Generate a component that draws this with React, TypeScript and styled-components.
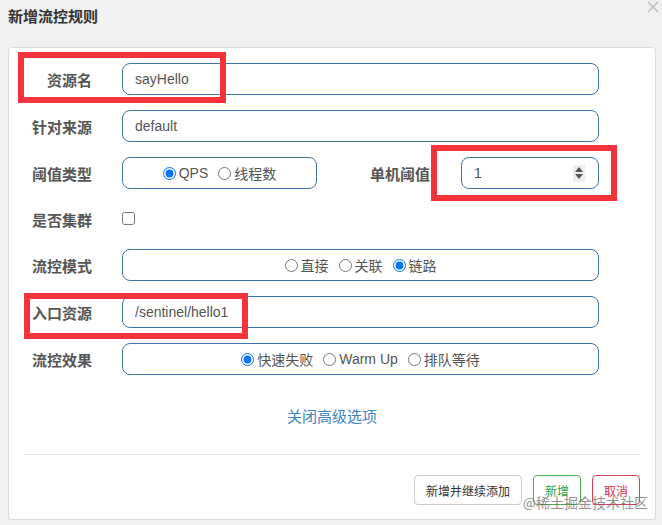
import styled, { createGlobalStyle } from 'styled-components';

const GlobalStyle = createGlobalStyle`
    html, body {
        margin: 0;
        padding: 0;
        background: #f0f0f0;
    }
    * {
        box-sizing: border-box;
    }
`;

const FONT = `"Liberation Sans", "Noto Sans CJK SC", sans-serif`;
const CJK = `"Noto Sans CJK SC", "Liberation Sans", sans-serif`;

const Page = styled.div`
    position: relative;
    width: 662px;
    height: 525px;
    background: #f0f0f0;
    font-family: ${FONT};
    overflow: hidden;
`;

const Header = styled.div`
    height: 47px;
    display: flex;
    align-items: flex-start;
    justify-content: space-between;
    padding: 5px 2px 0 8px;
`;

const Title = styled.div`
    font-family: ${CJK};
    font-size: 15px;
    font-weight: 600;
    color: #333;
    line-height: 22px;
`;

const CloseBtn = styled.div`
    margin-top: -5px;
    width: 14px;
    height: 14px;
    display: flex;
    align-items: center;
    justify-content: center;
`;

const Card = styled.div`
    margin: 0 6px 0 8px;
    background: #fff;
    border: 1px solid #dcdcdc;
    border-radius: 4px;
    padding: 15px 0 14px;
`;

const Form = styled.div`
    display: flex;
    flex-direction: column;
    gap: 15px;
    padding: 0 56px 0 15px;
`;

const Row = styled.div<{ $h?: number }>`
    display: grid;
    grid-template-columns: 68px 1fr;
    column-gap: 30px;
    align-items: center;
    height: ${({ $h }) => $h ?? 32}px;
`;

const Label = styled.label`
    font-family: ${CJK};
    font-size: 15px;
    font-weight: bold;
    color: #555;
    text-align: right;
    white-space: nowrap;
`;

const Field = styled.div`
    height: 32px;
    border: 1px solid #3f74a6;
    border-radius: 8px;
    display: flex;
    align-items: center;
    padding: 0 12px;
    font-size: 14px;
    color: #555;
`;

const TextInput = styled.input`
    border: none;
    outline: none;
    background: transparent;
    width: 100%;
    font-family: ${FONT};
    font-size: 14px;
    color: #555;
    padding: 0;
`;

const RadioBox = styled(Field)<{ $w?: number }>`
    justify-content: center;
    gap: 10px;
    ${({ $w }) => ($w ? `width: ${$w}px; flex: none;` : '')}
`;

const RadioItem = styled.label`
    display: flex;
    align-items: center;
    gap: 2px;
    font-family: ${FONT};
    font-size: 14px;
    color: #555;
    white-space: nowrap;

    & > input {
        margin: 0 1px 0 0;
        width: 13px;
        height: 13px;
    }
`;

const SplitRow = styled.div`
    display: flex;
    align-items: center;
`;

const SubLabel = styled(Label)`
    flex: 1;
    padding-right: 31px;
`;

const NumberField = styled(Field)`
    width: 138px;
    flex: none;
    padding: 0 13px 0 12px;
`;

const Spinner = styled.div`
    width: 12px;
    height: 17px;
    background: #eeeeee;
    display: flex;
    flex-direction: column;
    align-items: center;
    justify-content: center;
    gap: 2px;
    flex: none;
`;

const Check = styled.input`
    margin: 3px 0 0 0;
    width: 13px;
    height: 13px;
`;

const LinkRow = styled.div`
    margin-top: 31px;
    text-align: center;
    line-height: 20px;
`;

const Link = styled.a`
    font-family: ${CJK};
    font-size: 15px;
    color: #3d84c4;
    cursor: pointer;
`;

const Divider = styled.div`
    margin: 27px 15px 0;
    height: 1px;
    background: #e3e3e3;
`;

const Footer = styled.div`
    margin-top: 20px;
    padding: 0 15px;
    display: flex;
    justify-content: flex-end;
    gap: 11px;
`;

const Button = styled.button<{ $tone?: 'default' | 'success' | 'danger' }>`
    height: 30px;
    padding: 0 11px;
    border-radius: 4px;
    background: #fff;
    font-family: ${CJK};
    font-size: 12px;
    cursor: pointer;
    border: 1px solid
        ${({ $tone }) =>
            $tone === 'success' ? '#4cae4c' : $tone === 'danger' ? '#d43f5a' : '#cccccc'};
    color: ${({ $tone }) =>
        $tone === 'success' ? '#2e9e3e' : $tone === 'danger' ? '#d4304f' : '#333'};
`;

const Mark = styled.div<{ $x: number; $y: number; $w: number; $h: number }>`
    position: absolute;
    left: ${({ $x }) => $x}px;
    top: ${({ $y }) => $y}px;
    width: ${({ $w }) => $w}px;
    height: ${({ $h }) => $h}px;
    border: 6px solid #f4333b;
    pointer-events: none;
`;

const Watermark = styled.div`
    position: absolute;
    right: 14px;
    bottom: 13px;
    font-family: ${CJK};
    font-size: 14px;
    color: rgba(110, 110, 110, 0.75);
    pointer-events: none;
`;

function App() {
    return (
        <Page>
            <GlobalStyle />
            <Header>
                <Title>新增流控规则</Title>
                <CloseBtn>
                    <svg width="12" height="12" viewBox="0 0 12 12">
                        <path d="M1 1L11 11M11 1L1 11" stroke="#bdbdbd" strokeWidth="1.4" />
                    </svg>
                </CloseBtn>
            </Header>
            <Card>
                <Form>
                    <Row>
                        <Label>资源名</Label>
                        <Field>
                            <TextInput defaultValue="sayHello" />
                        </Field>
                    </Row>
                    <Row>
                        <Label>针对来源</Label>
                        <Field>
                            <TextInput defaultValue="default" />
                        </Field>
                    </Row>
                    <Row>
                        <Label>阈值类型</Label>
                        <SplitRow>
                            <RadioBox $w={195}>
                                <RadioItem>
                                    <input type="radio" name="grade" defaultChecked />
                                    QPS
                                </RadioItem>
                                <RadioItem>
                                    <input type="radio" name="grade" />
                                    线程数
                                </RadioItem>
                            </RadioBox>
                            <SubLabel>单机阈值</SubLabel>
                            <NumberField>
                                <TextInput defaultValue="1" />
                                <Spinner>
                                    <svg width="8" height="5" viewBox="0 0 8 5">
                                        <path d="M4 0L8 5H0Z" fill="#555" />
                                    </svg>
                                    <svg width="8" height="5" viewBox="0 0 8 5">
                                        <path d="M0 0H8L4 5Z" fill="#555" />
                                    </svg>
                                </Spinner>
                            </NumberField>
                        </SplitRow>
                    </Row>
                    <Row $h={30}>
                        <Label>是否集群</Label>
                        <div>
                            <Check type="checkbox" />
                        </div>
                    </Row>
                    <Row>
                        <Label>流控模式</Label>
                        <RadioBox>
                            <RadioItem>
                                <input type="radio" name="strategy" />
                                直接
                            </RadioItem>
                            <RadioItem>
                                <input type="radio" name="strategy" />
                                关联
                            </RadioItem>
                            <RadioItem>
                                <input type="radio" name="strategy" defaultChecked />
                                链路
                            </RadioItem>
                        </RadioBox>
                    </Row>
                    <Row>
                        <Label>入口资源</Label>
                        <Field>
                            <TextInput defaultValue="/sentinel/hello1" />
                        </Field>
                    </Row>
                    <Row>
                        <Label>流控效果</Label>
                        <RadioBox>
                            <RadioItem>
                                <input type="radio" name="behavior" defaultChecked />
                                快速失败
                            </RadioItem>
                            <RadioItem>
                                <input type="radio" name="behavior" />
                                Warm Up
                            </RadioItem>
                            <RadioItem>
                                <input type="radio" name="behavior" />
                                排队等待
                            </RadioItem>
                        </RadioBox>
                    </Row>
                </Form>
                <LinkRow>
                    <Link>关闭高级选项</Link>
                </LinkRow>
                <Divider />
                <Footer>
                    <Button>新增并继续添加</Button>
                    <Button $tone="success">新增</Button>
                    <Button $tone="danger">取消</Button>
                </Footer>
            </Card>

            <Mark $x={18} $y={52} $w={208} $h={51} />
            <Mark $x={431} $y={145} $w={186} $h={56} />
            <Mark $x={24} $y={293} $w={224} $h={46} />
            <Watermark>@稀土掘金技术社区</Watermark>
        </Page>
    );
}

export default App;
